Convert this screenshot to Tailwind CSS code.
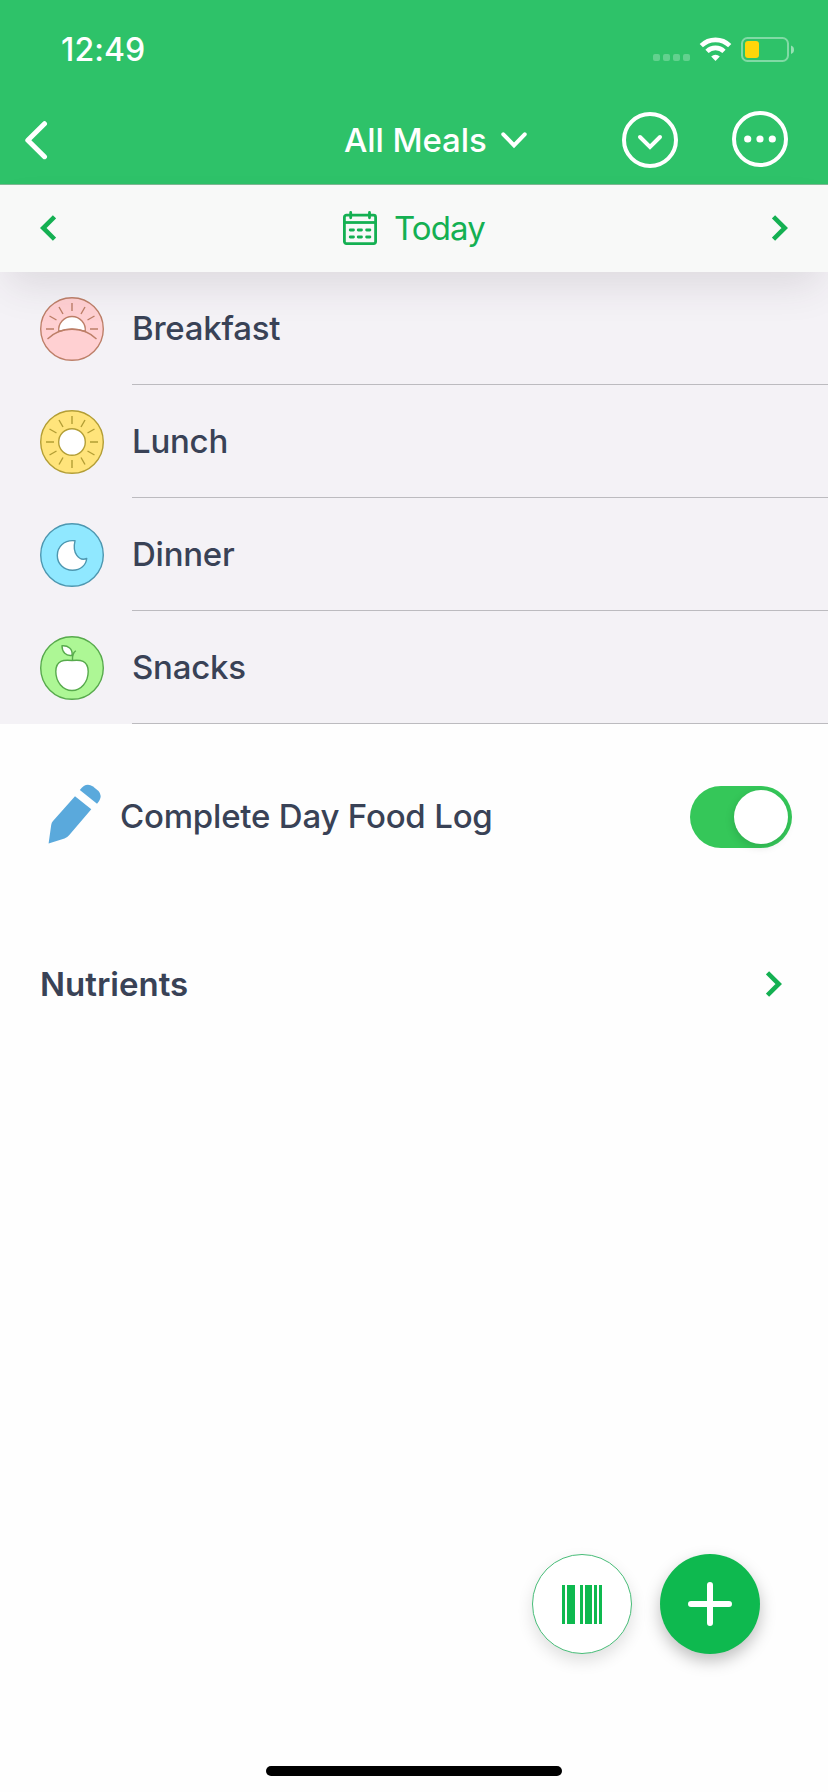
<!DOCTYPE html>
<html lang="en">
<head>
<meta charset="utf-8">
<title>All Meals</title>
<script src="https://cdn.jsdelivr.net/npm/@tailwindcss/browser@4"></script>
</head>
<body class="bg-white">
<div class="flex h-[1792px] w-[828px] flex-col overflow-hidden bg-[#fefefe] font-['Inter',sans-serif] text-[33px] leading-[40px] text-[#394256]">
  <header class="flex h-[185px] flex-col border-b border-[#7fb894] bg-[#2ec269] text-white">
    <div class="flex h-[98px] items-center justify-between pt-0.5 pr-[34px] pl-[61px]">
      <span class="text-[32px] font-[550] tracking-[0.1px]">12:49</span>
      <svg class="h-[30px] w-[144px]" viewBox="650 35 144 30" fill="none">
        <g fill="#fff" fill-opacity=".25">
          <rect x="653" y="54" width="7" height="7" rx="2"/><rect x="663" y="54" width="7" height="7" rx="2"/><rect x="673" y="54" width="7" height="7" rx="2"/><rect x="683" y="54" width="7" height="7" rx="2"/>
        </g>
        <g stroke="#fff" stroke-width="4.6">
          <path d="M701.3 45.7a20.2 20.2 0 0 1 28.4 0"/>
          <path d="M707 51.3a12.2 12.2 0 0 1 17 0"/>
        </g>
        <path fill="#fff" d="M715.5 61l-4.3-4.5a6.2 6.2 0 0 1 8.600 0z"/>
        <rect x="742" y="38" width="46" height="23" rx="5.500" stroke="#fff" stroke-opacity=".4" stroke-width="2"/>
        <rect x="745" y="41" width="14" height="17" rx="3" fill="#ffd60a"/>
        <path d="M791 45.500q3 1 3 4.200t-3 4.200z" fill="#fff" fill-opacity=".5"/>
      </svg>
    </div>
    <div class="flex h-[84px] items-center pl-6">
      <svg class="h-10 w-6" viewBox="24 120 24 40" fill="none" stroke="#fff" stroke-width="5" stroke-linecap="round" stroke-linejoin="round"><path d="M44.500 123.700L27.800 140.200l16.700 16.500"/></svg>
      <span class="ml-[296px] w-[144px] font-[550] tracking-[-0.1px] whitespace-nowrap">All Meals</span>
      <svg class="ml-3 h-5 w-7" viewBox="500 130 28 20" fill="none" stroke="#fff" stroke-width="4" stroke-linecap="round"><path d="M503.300 134.300l10.700 11 10.700-11"/></svg>
      <svg class="ml-[94px] h-14 w-14" viewBox="0 0 56 56" fill="none" stroke="#fff" stroke-width="4" stroke-linecap="round"><circle cx="28" cy="28" r="26"/><path d="M18 25l10 10 10-10"/></svg>
      <svg class="-mt-0.5 ml-[54px] h-14 w-14" viewBox="0 0 56 56" fill="none" stroke="#fff" stroke-width="4"><circle cx="28" cy="28" r="26"/><g fill="#fff" stroke="none"><circle cx="15.700" cy="28" r="3.600"/><circle cx="28" cy="28" r="3.600"/><circle cx="40.300" cy="28" r="3.600"/></g></svg>
    </div>
  </header>
  <div class="relative z-10 flex h-[87px] items-center bg-[#f8f9f8] pb-0.5 text-[#14b052] shadow-[0_20px_40px_-8px_rgba(60,50,60,0.13)]">
    <svg class="ml-10 h-[26px] w-4" viewBox="0 0 16 26" fill="none" stroke="currentColor" stroke-width="4.600"><path d="M14.500 1.800L3.200 13l11.300 11.200"/></svg>
    <svg class="ml-[287px] h-[34px] w-[34px]" viewBox="0 0 34 34" fill="none" stroke="currentColor" stroke-width="2.800"><rect x="1.400" y="4.200" width="31.200" height="28.400" rx="2"/><path d="M1 11.500h32"/><path stroke-linecap="round" d="M7.700 1.500v5.300M26.500 1.500v5.300M7.200 19h3.300M15.200 19h3.300M23.600 19h3.300M7.200 26h3.300M15.200 26h3.300M23.600 26h3.300"/></svg>
    <span class="ml-[17px] w-[100px] tracking-[-0.9px] whitespace-nowrap">Today</span>
    <svg class="ml-[278px] h-[26px] w-4" viewBox="0 0 16 26" fill="none" stroke="currentColor" stroke-width="4.600"><path d="M1.500 1.800L12.800 13 1.500 24.200"/></svg>
  </div>
  <main>
    <ul class="bg-[#f4f2f6] pl-10 font-medium tracking-[-0.25px]">
      <li class="flex h-[113px] items-center">
        <svg class="h-16 w-16" viewBox="0 0 64 64" fill="none" stroke="#bd7f68" stroke-width="1.400">
          <circle cx="32" cy="32" r="31.300" fill="#ffd0d2"/>
          <path d="M32 6v8M19 10l4 7M45 10l-4 7M9.500 19l7 4M54.500 19l-7 4M6 32h8M58 32h-8"/>
          <path fill="#fff" d="M18.800 34.500a13.300 13.300 0 1 1 26.400 0Q32 30 18.800 34.500z"/>
          <path d="M7.500 42Q18 32 32 32t24.500 10"/>
        </svg>
        <div class="ml-7 flex h-full flex-1 items-center border-b border-[#bcbbbf]"><span>Breakfast</span></div>
      </li>
      <li class="flex h-[113px] items-center">
        <svg class="h-16 w-16" viewBox="0 0 64 64" fill="none" stroke="#b39e35" stroke-width="1.400">
          <circle cx="32" cy="32" r="31.300" fill="#ffe47b"/>
          <path d="M32 6v8M19 10l4 7M45 10l-4 7M9.500 19l7 4M54.500 19l-7 4M6 32h8M58 32h-8M9.500 45l7-4M54.500 45l-7-4M19 54.500l4-7M45 54.500l-4-7M32 58v-8"/>
          <circle cx="32" cy="32" r="13.300" fill="#fff"/>
        </svg>
        <div class="ml-7 flex h-full flex-1 items-center border-b border-[#bcbbbf]"><span>Lunch</span></div>
      </li>
      <li class="flex h-[113px] items-center">
        <svg class="h-16 w-16" viewBox="0 0 64 64" fill="none" stroke="#4d97b0" stroke-width="1.400">
          <circle cx="32" cy="32" r="31.300" fill="#90e8ff"/>
          <path fill="#fff" stroke-linejoin="round" d="M35 17.800C24 16.500 17.300 24 17.300 32.500S24 47.300 32.500 47.300 46 42 46.700 35.500C39 38.500 32 30 35 17.800z"/>
        </svg>
        <div class="ml-7 flex h-full flex-1 items-center border-b border-[#bcbbbf]"><span>Dinner</span></div>
      </li>
      <li class="flex h-[113px] items-center">
        <svg class="h-16 w-16" viewBox="0 0 64 64" fill="none" stroke="#57aa4c" stroke-width="1.400" stroke-linejoin="round">
          <circle cx="32" cy="32" r="31.300" fill="#adf795"/>
          <path fill="#fff" d="M32 24.500C24 23.500 15.800 24 15.800 35.500 15.800 46 23 54.500 32 54.500S48.200 46 48.200 35.500C48.200 24 40 23.500 32 24.500z"/>
          <path d="M32.500 24.500c0-4-.5-7 3.300-9.800M32.500 20l-2-2.500"/>
          <path fill="#fff" d="M22 9.800c6-.5 11 3 10 9.500-6 1-10-3-10-9.500z"/>
        </svg>
        <div class="ml-7 flex h-full flex-1 items-center border-b border-[#bcbbbf]"><span>Snacks</span></div>
      </li>
    </ul>
    <section class="flex h-[186px] items-center pr-9 pl-[46px]">
      <svg class="mb-1.5 h-16 w-14" viewBox="46 781 56 64" fill="#5aa9dc"><path d="M75 795.300L91.300 808.200 69.300 834Q67.500 836.300 64.500 837.500L48.600 842.500 51.200 824Q51.500 821.500 53 820z"/><path d="M79.800 789Q86 780.500 93 785.500L98.500 790Q103.500 795.500 97 802.800z"/></svg>
      <span class="mb-0.5 ml-[18px] w-[380px] font-medium tracking-[-0.2px] whitespace-nowrap">Complete Day Food Log</span>
      <div class="ml-auto flex h-[62px] w-[102px] items-center justify-end rounded-full bg-[#35c759] pr-1">
        <div class="h-[54px] w-[54px] rounded-full bg-white shadow-[-1px_3px_8px_rgba(0,0,0,0.13)]"></div>
      </div>
    </section>
    <section class="mt-[23px] flex h-[102px] items-center justify-between pr-[46px] pl-10">
      <h2 class="font-semibold">Nutrients</h2>
      <svg class="h-[26px] w-4" viewBox="0 0 16 26" fill="none" stroke="#14b052" stroke-width="4.600"><path d="M1.500 1.800L12.800 13 1.500 24.200"/></svg>
    </section>
  </main>
  <footer class="mt-auto flex flex-col items-center pb-4">
    <div class="mb-[112px] flex gap-7 self-end pr-[68px]">
      <button class="flex h-[100px] w-[100px] items-center justify-center rounded-full border border-[#48bd78] bg-white shadow-[0_7px_16px_rgba(0,0,0,0.12)]">
        <svg class="h-[39px] w-10" viewBox="0 0 40 39" fill="#0eb94f"><path d="M0 0h3v39H0zM5 0h8v39H5zM18 0h3v39h-3zM23 0h7v39h-7zM32 0h3v39h-3zM37 0h3v39h-3z"/></svg>
      </button>
      <button class="flex h-[100px] w-[100px] items-center justify-center rounded-full bg-[#0eb94f] shadow-[0_7px_16px_rgba(0,0,0,0.25)]">
        <svg class="h-11 w-11" viewBox="0 0 44 44" stroke="#fff" stroke-width="6" stroke-linecap="round"><path d="M22 3v38M3 22h38"/></svg>
      </button>
    </div>
    <div class="h-2.5 w-[296px] rounded-full bg-black"></div>
  </footer>
</div>
</body>
</html>
